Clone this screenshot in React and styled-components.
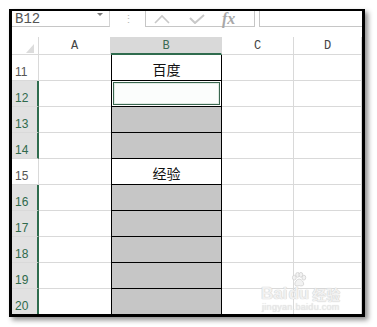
import React from "react";
import styled, { createGlobalStyle } from "styled-components";

const GREEN = "#2f6c4e";
const GRID = "#d9d9d9";

const GlobalStyle = createGlobalStyle`
  html, body { margin: 0; padding: 0; background: #fff; }
  body {
    width: 377px; height: 327px; overflow: hidden;
    font-family: "Liberation Sans", Arial, sans-serif;
  }
`;

const Stage = styled.div`
  padding: 9px 0 0 9px;
`;

const Frame = styled.div`
  position: relative;
  width: 350px;
  height: 303px;
  border-style: solid;
  border-color: #000;
  border-width: 2px 3px 3px 3px;
  box-shadow: 3px 3px 5px rgba(0, 0, 0, 0.45);
  background: #fff;
  overflow: hidden;
  display: flex;
  flex-direction: column;
`;

/* ---------- formula bar ---------- */
const FormulaBar = styled.div`
  display: flex;
  height: 16px;
  flex: none;
`;

const NameBox = styled.div`
  position: relative;
  width: 98px;
  box-sizing: border-box;
  border-right: 1px solid #d4d4d4;
  border-bottom: 1px solid #c6c6c6;
  display: flex;
  align-items: flex-end;
  padding: 0 0 0 3px;
  font-family: "Liberation Mono", monospace;
  font-size: 14px;
  line-height: 14px;
  color: #555;
  overflow: hidden;
`;

const DropArrow = styled.span`
  position: absolute;
  right: 6px;
  top: 2px;
  width: 0;
  height: 0;
  border-left: 3px solid transparent;
  border-right: 3px solid transparent;
  border-top: 3px solid #777;
`;

const Grip = styled.div`
  width: 33px;
  display: flex;
  justify-content: center;
  align-items: center;
  color: #bbb;
  font-size: 11px;
  line-height: 11px;
  padding-left: 2px;
`;

const FxBox = styled.div`
  width: 110px;
  box-sizing: border-box;
  border: 1px solid #c6c6c6;
  border-top: none;
  display: flex;
  align-items: center;
  padding-left: 8px;
  gap: 19px;
`;

const FxText = styled.span`
  font-family: "Liberation Serif", serif;
  font-style: italic;
  font-weight: bold;
  font-size: 16px;
  line-height: 14px;
  color: #a8a8a8;
  margin-left: -2px;
`;

const FormulaInput = styled.div`
  flex: 1;
  margin-left: 4px;
  border-left: 1px solid #c6c6c6;
  border-bottom: 1px solid #c6c6c6;
`;

const Spacer = styled.div`
  height: 10px;
  flex: none;
`;

/* ---------- sheet ---------- */
const COLS = "27px 72px 111px 72px 1fr";

const HeaderRow = styled.div`
  display: grid;
  grid-template-columns: ${COLS};
  height: 18px;
  flex: none;
`;

const ColHead = styled.div`
  position: relative;
  box-sizing: border-box;
  display: flex;
  justify-content: center;
  align-items: flex-end;
  padding-bottom: ${(p) => (p.$active ? "1px" : "2px")};
  background: ${(p) => (p.$active ? "#d9d9d9" : "#fff")};
  border-right: 1px solid ${GRID};
  border-bottom: ${(p) => (p.$active ? `2px solid ${GREEN}` : `1px solid ${GRID}`)};
  font-family: "Liberation Mono", monospace;
  font-size: 12px;
  line-height: 12px;
  color: ${(p) => (p.$active ? "#3b6a52" : "#444")};
`;

const Corner = styled(ColHead)`
  justify-content: flex-end;
  padding: 0 4px 1px 0;
`;

const Body = styled.div`
  display: grid;
  grid-template-columns: ${COLS};
  grid-auto-rows: 26px;
`;

const RowHead = styled.div`
  box-sizing: border-box;
  display: flex;
  align-items: flex-end;
  padding: 0 0 2px 3px;
  background: ${(p) => (p.$sel ? "#e1e1e1" : "#fff")};
  border-bottom: 1px solid ${GRID};
  border-right: ${(p) => (p.$sel ? `2px solid ${GREEN}` : `1px solid ${GRID}`)};
  font-size: 12px;
  line-height: 11px;
  color: ${(p) => (p.$sel ? "#2f6a4c" : "#555")};
`;

const Cell = styled.div`
  box-sizing: border-box;
  border-bottom: 1px solid ${GRID};
  border-right: ${(p) => (p.$noRight ? "none" : `1px solid ${GRID}`)};
`;

const BCell = styled.div`
  box-sizing: border-box;
  border-left: 1px solid #000;
  border-right: 1px solid #000;
  border-bottom: 1px solid #000;
  background: ${(p) => (p.$sel ? "#c6c6c6" : "#fff")};
  display: flex;
  justify-content: center;
  align-items: center;
  padding: ${(p) => (p.$active ? "1px" : "2px 0 0 0")};
  font-family: "Noto Sans CJK SC", sans-serif;
  font-size: 14px;
  color: #111;
`;

const ActiveMark = styled.div`
  flex: 1;
  align-self: stretch;
  border: 1px solid #3a664f;
  box-shadow: inset 0 0 0 1px #dfeae3;
  background: #fbfdfc;
`;

/* ---------- watermark ---------- */
const Watermark = styled.div`
  position: absolute;
  left: 249px;
  top: 261px;
  display: flex;
  flex-direction: column;
  align-items: flex-start;
  pointer-events: none;
`;

const MarkLine = styled.div`
  display: flex;
  align-items: flex-end;
  gap: 1px;
`;

const MarkWord = styled.span`
  font-family: "Liberation Sans", sans-serif;
  font-weight: bold;
  font-size: 17px;
  line-height: 14px;
  color: #f1f1f1;
  text-shadow: 0 0 1px #c9c9c9, 0 0 1px #d4d4d4;
`;

const MarkCJK = styled(MarkWord)`
  font-family: "Noto Sans CJK SC", sans-serif;
  font-size: 14px;
  margin-left: 2px;
`;

const MarkUrl = styled.span`
  font-family: "Liberation Sans", sans-serif;
  font-size: 9px;
  line-height: 9px;
  margin-top: 2px;
  margin-left: 1px;
  color: #eaeaea;
  text-shadow: 0 0 1px #cccccc;
  letter-spacing: 0.3px;
`;

const PawWrap = styled.div`
  display: flex;
  flex-direction: column;
  align-items: center;
`;

function Paw() {
  return (
    <svg width="18" height="15" viewBox="0 0 18 16">
      <g fill="#f2f2f2" stroke="#cfcfcf" strokeWidth="0.8">
        <ellipse cx="4" cy="6" rx="2" ry="2.6" />
        <ellipse cx="7.5" cy="3" rx="2" ry="2.6" />
        <ellipse cx="11" cy="3" rx="2" ry="2.6" />
        <ellipse cx="14.2" cy="6" rx="2" ry="2.6" />
        <path d="M9.2 7.5 C6.5 7.5 4.5 11 4.5 13 C4.5 15 7 15.2 9.2 14.5 C11.4 15.2 14 15 14 13 C14 11 12 7.5 9.2 7.5 Z" />
      </g>
    </svg>
  );
}

function Cross() {
  return (
    <svg width="16" height="10" viewBox="0 0 16 10">
      <path d="M1 9 L8 2 L15 9" fill="none" stroke="#c8c8c8" strokeWidth="1.6" />
    </svg>
  );
}

function Check() {
  return (
    <svg width="16" height="10" viewBox="0 0 16 10">
      <path d="M1 4 L6 9 L15 1" fill="none" stroke="#c8c8c8" strokeWidth="2" />
    </svg>
  );
}

function CornerMark() {
  return (
    <svg width="8" height="9" viewBox="0 0 8 9">
      <polygon points="8,0 8,9 0,9" fill="#dcdcdc" />
    </svg>
  );
}

const rows = [
  { n: 11, sel: false, b: { text: "百度" } },
  { n: 12, sel: true, b: { active: true } },
  { n: 13, sel: true, b: { sel: true } },
  { n: 14, sel: true, b: { sel: true } },
  { n: 15, sel: false, b: { text: "经验" } },
  { n: 16, sel: true, b: { sel: true } },
  { n: 17, sel: true, b: { sel: true } },
  { n: 18, sel: true, b: { sel: true } },
  { n: 19, sel: true, b: { sel: true } },
  { n: 20, sel: true, b: { sel: true } },
];

export default function App() {
  return (
    <>
      <GlobalStyle />
      <Stage>
        <Frame>
          <FormulaBar>
            <NameBox>
              B12
              <DropArrow />
            </NameBox>
            <Grip>⋮</Grip>
            <FxBox>
              <Cross />
              <Check />
              <FxText>fx</FxText>
            </FxBox>
            <FormulaInput />
          </FormulaBar>
          <Spacer />
          <HeaderRow>
            <Corner>
              <CornerMark />
            </Corner>
            <ColHead>A</ColHead>
            <ColHead $active>B</ColHead>
            <ColHead>C</ColHead>
            <ColHead>D</ColHead>
          </HeaderRow>
          <Body>
            {rows.map((r) => (
              <React.Fragment key={r.n}>
                <RowHead $sel={r.sel}>{r.n}</RowHead>
                <Cell $noRight />
                <BCell $sel={r.b.sel} $active={r.b.active}>
                  {r.b.active ? <ActiveMark /> : r.b.text}
                </BCell>
                <Cell />
                <Cell />
              </React.Fragment>
            ))}
          </Body>
          <Watermark>
            <MarkLine>
              <MarkWord>Bai</MarkWord>
              <PawWrap>
                <Paw />
                <MarkWord>du</MarkWord>
              </PawWrap>
              <MarkCJK>经验</MarkCJK>
            </MarkLine>
            <MarkUrl>jingyan.baidu.com</MarkUrl>
          </Watermark>
        </Frame>
      </Stage>
    </>
  );
}
